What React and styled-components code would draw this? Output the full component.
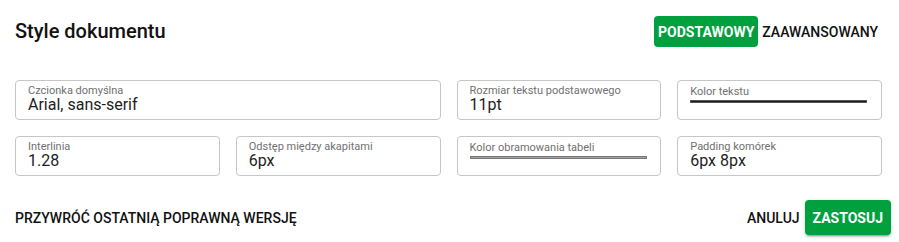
import React from 'react';
import styled, { createGlobalStyle } from 'styled-components';

const GREEN = '#00a03e';

const GlobalStyle = createGlobalStyle`
    html, body {
        margin: 0;
        padding: 0;
        background: #ffffff;
    }
    body {
        font-family: Roboto, "Liberation Sans", Arial, sans-serif;
        color: #1a1a1a;
    }
`;

const Dialog = styled.div`
    width: 899px;
    height: 242px;
    box-sizing: border-box;
    background: #fff;
    padding-top: 16px;
`;

const Header = styled.div`
    display: flex;
    align-items: center;
    justify-content: space-between;
    padding: 0 17px 0 15px;
    height: 31px;
`;

const Title = styled.h2`
    margin: 0;
    font-size: 20px;
    font-weight: 500;
    line-height: 31px;
    color: #111;
`;

const Tabs = styled.div`
    display: flex;
    align-items: stretch;
    height: 31px;
`;

const Tab = styled.button`
    font-family: inherit;
    font-size: 14px;
    font-weight: 500;
    text-transform: uppercase;
    border: none;
    border-radius: 4px;
    padding: 0 4px;
    cursor: pointer;
    background: transparent;
    color: #111;
    ${props => props.$active && `
        background: ${GREEN};
        color: #fff;
        font-weight: 700;
    `}
`;

const Grid = styled.div`
    display: grid;
    grid-template-columns: repeat(4, 1fr);
    gap: 16px;
    padding: 0 17px 0 15px;
    margin-top: 33px;
`;

const Field = styled.div`
    grid-column: span ${props => props.$span || 1};
    height: 40px;
    box-sizing: border-box;
    border: 1px solid #c6c6c6;
    border-radius: 4px;
    padding: 4px 12px 0;
    display: flex;
    flex-direction: column;
`;

const Label = styled.label`
    font-size: 11px;
    line-height: 12px;
    font-weight: 400;
    color: #707070;
    ${props => props.$swatch && `margin-top: 1px;`}
`;

const Value = styled.div`
    font-size: 16px;
    line-height: 15px;
    color: #1e1e1e;
`;

const Swatch = styled.div`
    width: 177px;
    height: 3px;
    margin-top: 2px;
    box-sizing: border-box;
    border: 1px solid ${props => props.$edge};
    background: ${props => props.$fill};
`;

const Footer = styled.div`
    display: flex;
    align-items: center;
    justify-content: space-between;
    margin-top: 24px;
    padding: 0 8px 0 15px;
`;

const TextButton = styled.button`
    font-family: inherit;
    font-size: 14px;
    font-weight: 500;
    text-transform: uppercase;
    color: #111;
    background: transparent;
    border: none;
    padding: 0 ${props => props.$pad || 0}px;
    height: 35px;
    cursor: pointer;
`;

const Actions = styled.div`
    display: flex;
    align-items: center;
    gap: 1px;
`;

const PrimaryButton = styled.button`
    font-family: inherit;
    font-size: 14px;
    font-weight: 700;
    text-transform: uppercase;
    color: #fff;
    background: ${GREEN};
    border: none;
    border-radius: 4px;
    height: 35px;
    padding: 0 8px;
    box-shadow: 0 3px 1px -2px rgba(0,0,0,0.2), 0 2px 2px 0 rgba(0,0,0,0.14), 0 1px 5px 0 rgba(0,0,0,0.12);
    cursor: pointer;
`;

const TextField = ({label, value, span}) => (
    <Field $span={span}>
        <Label>{label}</Label>
        <Value>{value}</Value>
    </Field>
);

const ColorField = ({label, fill, edge}) => (
    <Field>
        <Label $swatch>{label}</Label>
        <Swatch $fill={fill} $edge={edge}/>
    </Field>
);

export default function App() {
    return (
        <Dialog>
            <GlobalStyle/>
            <Header>
                <Title>Style dokumentu</Title>
                <Tabs>
                    <Tab $active>Podstawowy</Tab>
                    <Tab>Zaawansowany</Tab>
                </Tabs>
            </Header>
            <Grid>
                <TextField span={2} label="Czcionka domyślna" value="Arial, sans-serif"/>
                <TextField label="Rozmiar tekstu podstawowego" value="11pt"/>
                <ColorField label="Kolor tekstu" fill="#1a1a1a" edge="#555"/>
                <TextField label="Interlinia" value="1.28"/>
                <TextField label="Odstęp między akapitami" value="6px"/>
                <ColorField label="Kolor obramowania tabeli" fill="#a0a0a0" edge="#7a7a7a"/>
                <TextField label="Padding komórek" value="6px 8px"/>
            </Grid>
            <Footer>
                <TextButton>Przywróć ostatnią poprawną wersję</TextButton>
                <Actions>
                    <TextButton $pad={4}>Anuluj</TextButton>
                    <PrimaryButton>Zastosuj</PrimaryButton>
                </Actions>
            </Footer>
        </Dialog>
    );
}
